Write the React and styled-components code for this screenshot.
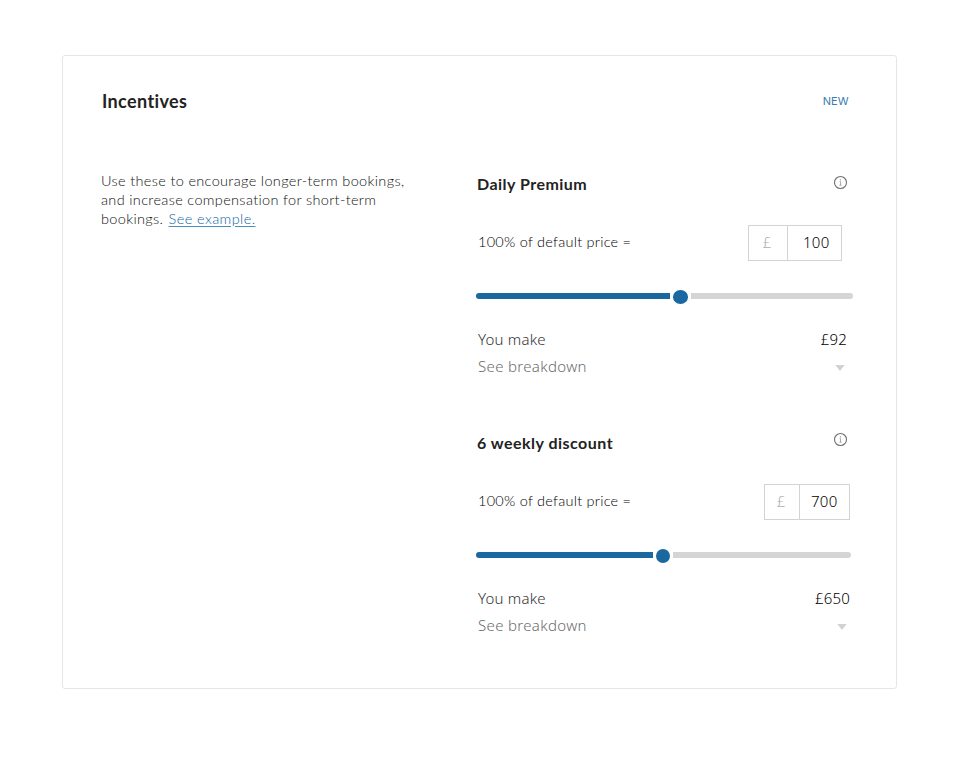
import React from "react";
import styled, { createGlobalStyle } from "styled-components";

const Global = createGlobalStyle`
  * { box-sizing: border-box; }
  body { margin: 0; background: #fff; font-family: Lato, "Open Sans", sans-serif; color: #222; }
`;

const Page = styled.main`
  width: 971px;
  height: 766px;
  padding: 55px 0 0 62px;
`;

const Card = styled.article`
  width: 835px;
  height: 634px;
  border: 1px solid #e6e6e6;
  border-radius: 3px;
`;

const Header = styled.header`
  display: flex;
  justify-content: space-between;
  align-items: center;
  height: 24px;
  margin: 33px 47.5px 0 39px;
`;

const Title = styled.h1`
  margin: 0;
  font-size: 18px;
  line-height: 24px;
  font-weight: 700;
  letter-spacing: 0.38px;
`;

const Tag = styled.span`
  font: 11px/16px Inter, sans-serif;
  color: #3a7cae;
`;

const Columns = styled.div`
  display: grid;
  grid-template-columns: 374px 378px;
  margin: 58px 0 0 38px;
`;

const Intro = styled.p`
  margin: 0;
  font-size: 14.5px;
  line-height: 19px;
  font-weight: 300;
  letter-spacing: 0.34px;
  color: #111;
  white-space: nowrap;
`;

const Link = styled.a`
  margin-left: 1px;
  letter-spacing: 0.42px;
  color: #0f66a6;
  text-decoration: underline;
  text-decoration-color: #4a8dbf;
  text-underline-offset: 2px;
`;

const Section = styled.section`
  height: 259px;
  padding-top: 3px;
`;

const SectionHead = styled.div`
  display: flex;
  justify-content: space-between;
  align-items: flex-start;
  height: 20px;
  padding: 0 5px 0 2px;
`;

const SectionTitle = styled.h2`
  margin: 0;
  font-size: 16px;
  line-height: 20px;
  font-weight: 700;
  letter-spacing: 0.48px;
`;

const InfoIcon = styled.svg`
  display: block;
  width: 15px;
  height: 15px;
  margin-top: ${(p) => p.$top}px;
`;

const PriceRow = styled.div`
  display: flex;
  justify-content: space-between;
  height: 36px;
  margin-top: 31px;
  padding: 0 ${(p) => p.$end}px 0 3px;
`;

const PriceLabel = styled.label`
  font-size: 14.5px;
  line-height: 34px;
  font-weight: 300;
  letter-spacing: 0.25px;
  color: #000;
`;

const PriceBox = styled.div`
  display: grid;
  grid-template-columns: ${(p) => p.$unit}px 1fr;
  width: ${(p) => p.$width}px;
  height: 36px;
  border: 1px solid #d3d3d3;
`;

const Unit = styled.span`
  border-right: 1px solid #d3d3d3;
  padding-right: 2px;
  text-align: center;
  font: 300 15px/33px "Noto Sans", sans-serif;
  color: #b0b0b0;
`;

const Amount = styled.span`
  padding-left: ${(p) => p.$start}px;
  font: 300 15px/32px "Noto Sans", sans-serif;
  letter-spacing: 0.3px;
  color: #000;
`;

const Slider = styled.div`
  display: flex;
  align-items: center;
  width: ${(p) => p.$width}px;
  height: 16px;
  margin: 27px 0 0 0.5px;
`;

const Fill = styled.div`
  width: ${(p) => p.$width}px;
  height: 6px;
  border-radius: 3px 0 0 3px;
  background: #1b68a1;
`;

const Knob = styled.div`
  width: ${(p) => p.$width}px;
  height: 14px;
  margin: 1px 3px 0;
  border-radius: 50%;
  background: #1b68a1;
`;

const Rest = styled.div`
  flex: 1;
  height: 6px;
  border-radius: 0 3px 3px 0;
  background: #d5d5d5;
`;

const Summary = styled.div`
  margin-top: 21px;
`;

const Line = styled.div`
  display: flex;
  justify-content: space-between;
  align-items: center;
  height: 27px;
  padding: 0 ${(p) => p.$end}px 0 3px;
  font-family: "Noto Sans", sans-serif;
  font-weight: 300;
  font-size: 15px;
  letter-spacing: ${(p) => p.$spacing}px;
  color: ${(p) => p.$color};
`;

const Earned = styled.span`
  color: #000;
`;

const Caret = styled.svg`
  display: block;
  width: 10px;
  height: 6px;
  margin-top: 4px;
`;

function Incentive({ data: d }) {
  return (
    <Section>
      <SectionHead>
        <SectionTitle>{d.title}</SectionTitle>
        <InfoIcon viewBox="0 0 15 15" $top={d.iconTop}>
          <circle cx="7.5" cy="7.5" r="6" fill="none" stroke="#707070" strokeWidth="1.1" />
          <path d="M6.5 6.6h1v3.5M6.4 10.2h2.2" fill="none" stroke="#888" strokeWidth=".7" />
          <circle cx="7.4" cy="4.8" r=".6" fill="#777" />
        </InfoIcon>
      </SectionHead>
      <PriceRow $end={d.boxEnd}>
        <PriceLabel>100% of default price =</PriceLabel>
        <PriceBox $width={d.boxWidth} $unit={d.unit}>
          <Unit>£</Unit>
          <Amount $start={d.amountStart}>{d.amount}</Amount>
        </PriceBox>
      </PriceRow>
      <Slider $width={d.track}>
        <Fill $width={d.fill} />
        <Knob $width={d.knob} />
        <Rest />
      </Slider>
      <Summary>
        <Line $end={d.earnEnd} $spacing={0.2} $color="#333">
          <span>You make</span>
          <Earned>{d.earned}</Earned>
        </Line>
        <Line $end={d.caretEnd} $spacing={0.33} $color="#6c6c6c">
          <span>See breakdown</span>
          <Caret viewBox="0 0 10 6"><path d="M.3 0h9.4L5 6z" fill="#d2d2d2" /></Caret>
        </Line>
      </Summary>
    </Section>
  );
}

const incentives = [
  { title: "Daily Premium", iconTop: 1, amount: "100", boxWidth: 94, boxEnd: 11, unit: 39, amountStart: 15, track: 377.5, fill: 194, knob: 15.5, earned: "£92", earnEnd: 6, caretEnd: 8 },
  { title: "6 weekly discount", iconTop: -1, amount: "700", boxWidth: 86, boxEnd: 3, unit: 35, amountStart: 11, track: 375.5, fill: 177.5, knob: 14, earned: "£650", earnEnd: 3, caretEnd: 6 },
];

export default function App() {
  return (
    <>
      <Global />
      <Page>
        <Card>
          <Header>
            <Title>Incentives</Title>
            <Tag>NEW</Tag>
          </Header>
          <Columns>
            <Intro>
              Use these to encourage longer-term bookings,<br />
              and increase compensation for short-term<br />
              bookings. <Link>See example.</Link>
            </Intro>
            <div>
              {incentives.map((d) => <Incentive key={d.title} data={d} />)}
            </div>
          </Columns>
        </Card>
      </Page>
    </>
  );
}
